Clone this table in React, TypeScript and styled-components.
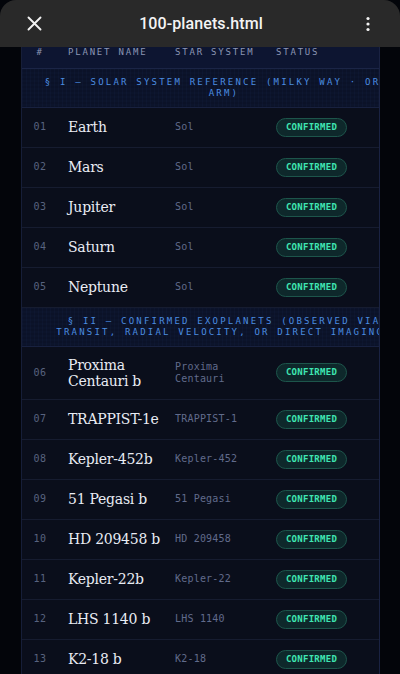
import React from 'react';
import styled, { createGlobalStyle } from 'styled-components';

const GlobalStyle = createGlobalStyle`
    html, body {
        margin: 0;
        padding: 0;
        background: #03050a;
    }
`;

const MONO = `'DejaVu Sans Mono', 'Liberation Mono', monospace`;
const SERIF = `'DejaVu Serif', 'Liberation Serif', serif`;

const Screen = styled.div`
    width: 400px;
    height: 674px;
    overflow: hidden;
    display: flex;
    flex-direction: column;
    background: #03050a;
`;

const TopBar = styled.header`
    flex: 0 0 47px;
    display: flex;
    align-items: center;
    justify-content: space-between;
    padding: 0 24px 0 26px;
    background: #292929;
    border-radius: 16px 16px 0 0;
    position: relative;
    z-index: 2;
`;

const Title = styled.span`
    color: #f4f4f4;
    font-family: Roboto, 'Noto Sans', sans-serif;
    font-size: 16px;
    font-weight: 500;
    letter-spacing: 0.1px;
`;

const IconButton = styled.span`
    width: 16px;
    height: 16px;
    display: flex;
    align-items: center;
    justify-content: center;
`;

const Content = styled.main`
    flex: 1;
    min-height: 0;
    padding: 0 20px 0 21px;
    overflow: hidden;
`;

const Panel = styled.div`
    height: 100%;
    overflow: hidden;
    background: #0a0e1b;
    border-left: 1px solid #161e38;
    border-right: 1px solid #1a2242;
`;

const Table = styled.table`
    width: 404px;
    table-layout: fixed;
    border-collapse: collapse;
`;

const HeadCell = styled.th<{ $center?: boolean }>`
    padding: 0 0 9px ${p => (p.$center ? '0' : '10px')};
    height: 21px;
    box-sizing: border-box;
    text-align: ${p => (p.$center ? 'center' : 'left')};
    vertical-align: top;
    font-family: ${MONO};
    font-size: 9px;
    line-height: 11px;
    font-weight: 400;
    letter-spacing: 0.2em;
    color: #8b95b4;
    background: #0d1531;
    border-bottom: 1px solid #1b2546;
    white-space: nowrap;
`;

const SectionCell = styled.td`
    padding: 8px 16px 8px;
    text-align: center;
    font-family: ${MONO};
    font-size: 9px;
    line-height: 11px;
    letter-spacing: 0.245em;
    color: #4b8de0;
    background-color: #0b1228;
    background-image: linear-gradient(rgba(70, 110, 200, 0.04) 1px, transparent 1px),
        linear-gradient(90deg, rgba(70, 110, 200, 0.04) 1px, transparent 1px);
    background-size: 4px 4px;
    border-bottom: 1px solid #18213f;
`;

const Row = styled.tr`
    border-bottom: 1px solid #161c30;
`;

const NumCell = styled.td`
    padding: 10px 0;
    text-align: center;
    vertical-align: middle;
    font-family: ${MONO};
    font-size: 10px;
    line-height: 12px;
    letter-spacing: 0.06em;
    color: #58637f;
`;

const NameCell = styled.td`
    padding: 10px 0 10px 10px;
    vertical-align: middle;
    font-family: ${SERIF};
    font-size: 14px;
    line-height: 16px;
    letter-spacing: -0.25px;
    color: #e9ecf4;
`;

const SystemCell = styled.td`
    padding: 10px 12px 10px 10px;
    vertical-align: middle;
    font-family: ${MONO};
    font-size: 10px;
    line-height: 12px;
    letter-spacing: 0.02em;
    color: #616b8b;
`;

const StatusCell = styled.td`
    padding: 10px 10px;
    vertical-align: middle;
    line-height: 0;
`;

const Badge = styled.span`
    display: flex;
    align-items: center;
    justify-content: center;
    width: 71px;
    height: 19px;
    box-sizing: border-box;
    border-radius: 10px;
    border: 1px solid #1d554b;
    background: #0e282b;
    color: #3fe6b2;
    font-family: ${MONO};
    font-size: 9px;
    font-weight: 600;
    line-height: 1;
    letter-spacing: 0.03em;
`;

interface Planet {
    id: string;
    name: string;
    system: string;
}

const solar: Planet[] = [
    { id: '01', name: 'Earth', system: 'Sol' },
    { id: '02', name: 'Mars', system: 'Sol' },
    { id: '03', name: 'Jupiter', system: 'Sol' },
    { id: '04', name: 'Saturn', system: 'Sol' },
    { id: '05', name: 'Neptune', system: 'Sol' },
];

const exoplanets: Planet[] = [
    { id: '06', name: 'Proxima Centauri b', system: 'Proxima Centauri' },
    { id: '07', name: 'TRAPPIST-1e', system: 'TRAPPIST-1' },
    { id: '08', name: 'Kepler-452b', system: 'Kepler-452' },
    { id: '09', name: '51 Pegasi b', system: '51 Pegasi' },
    { id: '10', name: 'HD 209458 b', system: 'HD 209458' },
    { id: '11', name: 'Kepler-22b', system: 'Kepler-22' },
    { id: '12', name: 'LHS 1140 b', system: 'LHS 1140' },
    { id: '13', name: 'K2-18 b', system: 'K2-18' },
    { id: '14', name: 'GJ 1214 b', system: 'GJ 1214' },
];

const PlanetRow = ({ planet }: { planet: Planet }) => (
    <Row>
        <NumCell>{planet.id}</NumCell>
        <NameCell>{planet.name}</NameCell>
        <SystemCell>{planet.system}</SystemCell>
        <StatusCell>
            <Badge>CONFIRMED</Badge>
        </StatusCell>
    </Row>
);

const Section = ({ children }: { children: React.ReactNode }) => (
    <tr>
        <SectionCell colSpan={4}>{children}</SectionCell>
    </tr>
);

const App = () => (
    <>
        <GlobalStyle />
        <Screen>
            <TopBar>
                <IconButton>
                    <svg width="15" height="15" viewBox="0 0 15 15">
                        <path d="M1.5 1.5 L13.5 13.5 M13.5 1.5 L1.5 13.5" stroke="#f2f2f2" strokeWidth="1.9" strokeLinecap="round" />
                    </svg>
                </IconButton>
                <Title>100-planets.html</Title>
                <IconButton>
                    <svg width="4" height="16" viewBox="0 0 4 16">
                        <circle cx="2" cy="2.5" r="1.6" fill="#f2f2f2" />
                        <circle cx="2" cy="8" r="1.6" fill="#f2f2f2" />
                        <circle cx="2" cy="13.5" r="1.6" fill="#f2f2f2" />
                    </svg>
                </IconButton>
            </TopBar>
            <Content>
                <Panel>
                    <Table>
                        <colgroup>
                            <col style={{ width: 36 }} />
                            <col style={{ width: 107 }} />
                            <col style={{ width: 101 }} />
                            <col style={{ width: 160 }} />
                        </colgroup>
                        <thead>
                            <tr>
                                <HeadCell $center>#</HeadCell>
                                <HeadCell>PLANET NAME</HeadCell>
                                <HeadCell>STAR SYSTEM</HeadCell>
                                <HeadCell>STATUS</HeadCell>
                            </tr>
                        </thead>
                        <tbody>
                            <Section>§ I — SOLAR SYSTEM REFERENCE (MILKY WAY · ORION ARM)</Section>
                            {solar.map(p => (
                                <PlanetRow key={p.id} planet={p} />
                            ))}
                            <Section>
                                § II — CONFIRMED EXOPLANETS (OBSERVED VIA TRANSIT, RADIAL VELOCITY, OR DIRECT IMAGING)
                            </Section>
                            {exoplanets.map(p => (
                                <PlanetRow key={p.id} planet={p} />
                            ))}
                        </tbody>
                    </Table>
                </Panel>
            </Content>
        </Screen>
    </>
);

export default App;
